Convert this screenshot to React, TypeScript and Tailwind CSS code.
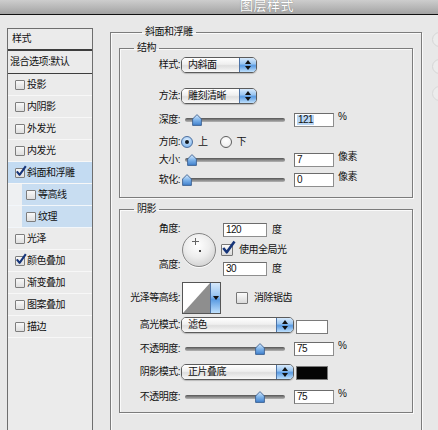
import React from "react";

function Check({ checked, big }: { checked?: boolean; big?: boolean }) {
  return (
    <span
      className={
        big
          ? "relative inline-block w-[12px] h-[12px] shrink-0 border border-[#777] rounded-[1px] bg-[linear-gradient(#fbfbfb,#dadada)]"
          : "relative inline-block w-[10px] h-[10px] shrink-0 border border-[#7d7d7d] rounded-[1px] bg-[linear-gradient(#f8f8f8,#dedede)]"
      }
    >
      {checked && (
        <svg
          className={big ? "absolute -top-[5px] -left-[1px] w-[15px] h-[15px]" : "absolute -top-[4px] -left-[1px] w-[12px] h-[12px]"}
          viewBox="0 0 12 12"
        >
          <path d="M1.8 6.4 L4.6 9.8 L10.8 1.2" stroke="#16357a" strokeWidth="2.1" fill="none" strokeLinejoin="round" />
        </svg>
      )}
    </span>
  );
}

function Radio({ on }: { on?: boolean }) {
  return (
    <span
      className={
        on
          ? "flex shrink-0 items-center justify-center w-[12px] h-[12px] rounded-full border border-[#4c6f9e] bg-[radial-gradient(circle_at_50%_35%,#e6f2ff,#8fbff0_70%,#5d93d6)]"
          : "block shrink-0 w-[12px] h-[12px] rounded-full border border-[#5e5e5e] bg-[radial-gradient(circle_at_50%_35%,#ffffff,#f2f2f2_60%,#d8d8d8)]"
      }
    >
      {on && <span className="w-[4px] h-[4px] rounded-full bg-[#101820]" />}
    </span>
  );
}

function Stepper({ down }: { down?: boolean }) {
  return (
    <div className="flex-1 flex flex-col items-center justify-center gap-[2px] border-l border-[#4d73a6] bg-[linear-gradient(#d6e9fc,#9cc7f1_40%,#5a9be2_55%,#bfe0fc)]">
      {!down && (
        <svg width="6" height="4" viewBox="0 0 6 4">
          <path d="M3 0 L6 4 L0 4 Z" fill="#111" />
        </svg>
      )}
      <svg width="6" height="4" viewBox="0 0 6 4">
        <path d="M0 0 L6 0 L3 4 Z" fill="#111" />
      </svg>
    </div>
  );
}

function Select({ value, wide }: { value: string; wide?: boolean }) {
  return (
    <div
      className={
        (wide ? "w-[113px] " : "w-[76px] ") +
        "flex h-[16px] rounded-[5px] border border-[#5b5b5b] overflow-hidden shadow-[0_1px_1px_rgba(0,0,0,0.2)]"
      }
    >
      <div className="flex-1 flex items-center pl-[6px] bg-[linear-gradient(#ffffff,#efefef_45%,#dedede_55%,#f8f8f8)]">
        {value}
      </div>
      <div className="w-[17px] flex flex-col">
        <Stepper />
      </div>
    </div>
  );
}

function Field({ value, wide, sel }: { value: string; wide?: boolean; sel?: boolean }) {
  return (
    <div
      className={
        (wide ? "w-[44px] " : "w-[40px] ") +
        "h-[14px] shrink-0 flex items-center pl-[2px] bg-white border border-[#8e8e8e] border-t-[#6c6c6c] border-l-[#747474] leading-none"
      }
    >
      {sel ? <span className="bg-[#b9d6f4] px-[1px]">{value}</span> : value}
    </div>
  );
}

function Thumb() {
  return (
    <svg width="10" height="12" viewBox="0 0 10 12">
      <defs>
        <linearGradient id="tb" x1="0" y1="0" x2="0" y2="1">
          <stop offset="0" stopColor="#d9ecff" />
          <stop offset="0.5" stopColor="#7fb4ea" />
          <stop offset="1" stopColor="#3f7fcc" />
        </linearGradient>
      </defs>
      <path d="M5 0.6 L9.4 5 L9.4 11.4 L0.6 11.4 L0.6 5 Z" fill="url(#tb)" stroke="#3b5f8e" strokeWidth="0.9" />
    </svg>
  );
}

function Slider({ at }: { at: number }) {
  return (
    <div className="relative w-[108px] h-[14px] shrink-0 flex items-center px-[4px]">
      <div className="w-full h-[4px] rounded-full bg-[linear-gradient(#555,#8f8f8f_60%,#b5b5b5)]" />
      <div className="absolute top-[1px] -ml-[5px] flex" style={{ left: at }}>
        <Thumb />
      </div>
    </div>
  );
}

function Label({ text }: { text: string }) {
  return <div className="w-[61px] shrink-0 text-right pr-[1px]">{text}</div>;
}

function ListRow({ text, checked, sel }: { text: string; checked?: boolean; sel?: boolean }) {
  return (
    <div
      className={
        (sel ? "bg-[#c3dbf2] " : "bg-[#ebebeb] ") +
        "h-[22px] flex items-center pl-[7px] border-b border-[#f7f7f7]"
      }
    >
      <Check checked={checked} />
      <span className="ml-[2px]">{text}</span>
    </div>
  );
}

function SubRow({ text }: { text: string }) {
  return (
    <div className="h-[22px] flex border-b border-[#f2f6fa] bg-[#eef0f2]">
      <div className="ml-[14px] flex-1 flex items-center pl-[4px] bg-[#c8ddf1]">
        <Check />
        <span className="ml-[2px]">{text}</span>
      </div>
    </div>
  );
}

export default function App() {
  return (
    <div className="w-[438px] h-[430px] overflow-hidden flex flex-col bg-[#e8e8e8] text-[10px] leading-[12px] tracking-[-0.5px] text-[#111] [font-family:'Liberation_Sans','Noto_Sans_CJK_SC',sans-serif]">
      {/* window title */}
      <div className="h-[15px] shrink-0 flex border-b border-[#111] bg-[linear-gradient(#cdcdcd,#b4b4b4_60%,#a2a2a2)]">
        <span className="ml-[240px] -mt-[2px] h-[16px] text-[13px] leading-[16px] tracking-[0.5px] text-white [text-shadow:0_0_1px_#666]">
          图层样式
        </span>
      </div>

      <div className="flex flex-1 min-h-0">
        {/* style list */}
        <div className="ml-[7px] mt-[13px] w-[86px] h-[420px] shrink-0 flex flex-col border border-[#6e6e6e] bg-[#ebebeb]">
          <div className="h-[22px] flex items-center pl-[4px] border-b-2 border-[#3d3d3d]">样式</div>
          <div className="h-[23px] flex items-center pl-[2px] border-b border-[#3d3d3d]">混合选项:默认</div>
          <ListRow text="投影" />
          <ListRow text="内阴影" />
          <ListRow text="外发光" />
          <ListRow text="内发光" />
          <ListRow text="斜面和浮雕" checked sel />
          <SubRow text="等高线" />
          <SubRow text="纹理" />
          <ListRow text="光泽" />
          <ListRow text="颜色叠加" checked />
          <ListRow text="渐变叠加" />
          <ListRow text="图案叠加" />
          <ListRow text="描边" />
        </div>

        {/* settings */}
        <fieldset className="ml-[17px] mt-[10px] w-[312px] h-[430px] shrink-0 px-[8px] border border-[#7c7c7c] shadow-[inset_1px_1px_0_#fafafa,1px_1px_0_#fafafa]">
          <legend className="ml-[23px] px-[3px] h-[14px] leading-[14px]">斜面和浮雕</legend>

          <fieldset className="mt-[2px] w-[294px] border border-[#7c7c7c] shadow-[inset_1px_1px_0_#fafafa,1px_1px_0_#fafafa] pb-[10px]">
            <legend className="ml-[14px] px-[3px] h-[14px] leading-[14px]">结构</legend>

            <div className="flex items-center mt-[2px] h-[16px]">
              <Label text="样式:" />
              <Select value="内斜面" />
            </div>
            <div className="flex items-center mt-[15px] h-[16px]">
              <Label text="方法:" />
              <Select value="雕刻清晰" />
            </div>
            <div className="flex items-center mt-[9px] h-[14px]">
              <Label text="深度:" />
              <Slider at={16} />
              <div className="ml-[5px]">
                <Field value="121" sel />
              </div>
              <span className="ml-[4px] self-start -mt-[2px]">%</span>
            </div>
            <div className="flex items-center mt-[8px] h-[14px]">
              <Label text="方向:" />
              <Radio on />
              <span className="ml-[5px]">上</span>
              <span className="ml-[12px] flex">
                <Radio />
              </span>
              <span className="ml-[5px]">下</span>
            </div>
            <div className="flex items-center mt-[4px] h-[14px]">
              <Label text="大小:" />
              <Slider at={11} />
              <div className="ml-[5px]">
                <Field value="7" />
              </div>
              <span className="ml-[4px] self-start -mt-[2px]">像素</span>
            </div>
            <div className="flex items-center mt-[6px] h-[14px]">
              <Label text="软化:" />
              <Slider at={6} />
              <div className="ml-[5px]">
                <Field value="0" />
              </div>
              <span className="ml-[4px] self-start -mt-[2px]">像素</span>
            </div>
          </fieldset>

          <fieldset className="mt-[4px] w-[294px] border border-[#7c7c7c] shadow-[inset_1px_1px_0_#fafafa,1px_1px_0_#fafafa] pb-[8px]">
            <legend className="ml-[14px] px-[3px] h-[14px] leading-[14px]">阴影</legend>

            {/* angle and altitude */}
            <div className="flex mt-[7px] h-[53px]">
              <div className="w-[61px] shrink-0 flex flex-col justify-between text-right pr-[1px]">
                <div className="h-[12px]">角度:</div>
                <div className="h-[12px] mb-[5px]">高度:</div>
              </div>
              <div className="relative ml-[1px] mt-[10px] w-[34px] h-[34px] rounded-full border border-[#858585] bg-[radial-gradient(circle_at_45%_35%,#ffffff,#ededed_45%,#cfcfcf_85%,#bcbcbc)] shadow-[0_1px_0_#fafafa]">
                <svg className="absolute left-[9px] top-[4px]" width="7" height="7" viewBox="0 0 7 7">
                  <path d="M3.5 0 V7 M0 3.5 H7" stroke="#666" strokeWidth="1" />
                </svg>
                <span className="absolute left-[16px] top-[16px] w-[2px] h-[2px] bg-[#444]" />
              </div>
              <div className="ml-[5px] flex flex-col">
                <div className="flex items-center ml-[2px] h-[14px]">
                  <Field value="120" wide />
                  <span className="ml-[5px]">度</span>
                </div>
                <div className="flex items-center mt-[7px] h-[12px]">
                  <Check checked big />
                  <span className="ml-[6px]">使用全局光</span>
                </div>
                <div className="flex items-center ml-[2px] mt-[6px] h-[14px]">
                  <Field value="30" wide />
                  <span className="ml-[5px]">度</span>
                </div>
              </div>
            </div>

            {/* gloss contour */}
            <div className="flex items-center mt-[6px] h-[32px]">
              <Label text="光泽等高线:" />
              <div className="ml-[1px] w-[39px] h-[32px] flex border border-[#555]">
                <svg className="w-[27px] h-full bg-white" viewBox="0 0 27 30" preserveAspectRatio="none">
                  <path d="M0 30 L27 0 L27 30 Z" fill="#8e8e8e" />
                </svg>
                <div className="flex-1 flex flex-col">
                  <Stepper down />
                </div>
              </div>
              <div className="ml-[15px] flex items-center">
                <Check big />
                <span className="ml-[6px]">消除锯齿</span>
              </div>
            </div>

            <div className="flex items-center mt-[3px] h-[16px]">
              <Label text="高光模式:" />
              <Select value="滤色" wide />
              <div className="ml-[2px] w-[32px] h-[14px] mt-[3px] bg-white border border-[#7a7a7a]" />
            </div>
            <div className="flex items-center mt-[9px] h-[14px]">
              <Label text="不透明度:" />
              <Slider at={79} />
              <div className="ml-[5px]">
                <Field value="75" />
              </div>
              <span className="ml-[4px] self-start -mt-[2px]">%</span>
            </div>
            <div className="flex items-center mt-[8px] h-[16px]">
              <Label text="阴影模式:" />
              <Select value="正片叠底" wide />
              <div className="ml-[2px] w-[32px] h-[14px] mt-[2px] bg-[#050505] border border-[#7a7a7a]" />
            </div>
            <div className="flex items-center mt-[10px] h-[14px]">
              <Label text="不透明度:" />
              <Slider at={79} />
              <div className="ml-[5px]">
                <Field value="75" />
              </div>
              <span className="ml-[4px] self-start -mt-[2px]">%</span>
            </div>
          </fieldset>
        </fieldset>

        {/* dialog buttons, mostly outside the window */}
        <div className="ml-[10px] mt-[17px] flex flex-col gap-[12px]">
          <div className="w-[60px] h-[15px] rounded-full border border-[#d6d6d6] bg-[#ececec]" />
          <div className="w-[60px] h-[15px] rounded-full border border-[#d6d6d6] bg-[#ececec]" />
          <div className="w-[60px] h-[15px] rounded-full border border-[#d9d9d9] bg-[#ececec]" />
        </div>
      </div>
    </div>
  );
}
